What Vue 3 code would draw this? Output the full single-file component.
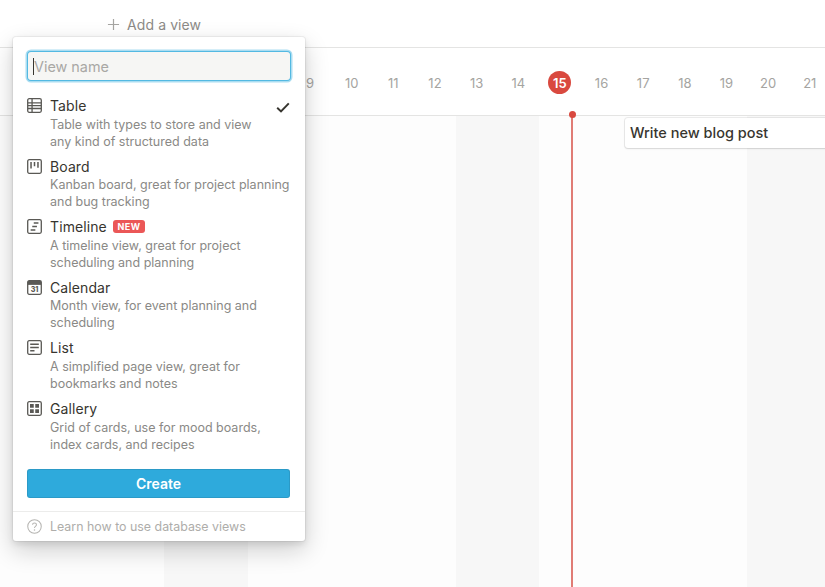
<script setup>
const weekendDays = [6, 7, 13, 14, 20, 21]
const days = Array.from({ length: 19 }, (_, i) => i + 3)
  .map((n) => ({ n, weekend: weekendDays.includes(n), today: n === 15 }))

const views = [
  { name: 'Table', icon: 'table', checked: true, lines: ['Table with types to store and view', 'any kind of structured data'] },
  { name: 'Board', icon: 'board', lines: ['Kanban board, great for project planning', 'and bug tracking'] },
  { name: 'Timeline', icon: 'timeline', badge: 'NEW', lines: ['A timeline view, great for project', 'scheduling and planning'] },
  { name: 'Calendar', icon: 'calendar', lines: ['Month view, for event planning and', 'scheduling'] },
  { name: 'List', icon: 'list', lines: ['A simplified page view, great for', 'bookmarks and notes'] },
  { name: 'Gallery', icon: 'gallery', lines: ['Grid of cards, use for mood boards,', 'index cards, and recipes'] },
]
</script>

<template>
  <div class="page">
    <header class="topbar">
      <button class="add-view">
        <svg class="plus" viewBox="0 0 14 14"><path d="M7 1v12M1 7h12" /></svg>
        <span>Add a view</span>
      </button>
    </header>

    <div class="dates">
      <div v-for="d in days" :key="d.n" class="date">
        <span class="date-num" :class="{ today: d.today }">{{ d.n }}</span>
      </div>
    </div>

    <div class="canvas">
      <div v-for="d in days" :key="d.n" class="col" :class="{ weekend: d.weekend }"></div>
    </div>

    <div class="today-line"></div>
    <div class="today-dot"></div>
    <div class="card">Write new blog post</div>

    <section class="popup">
      <div class="search">
        <div class="input"><i class="caret"></i><span>View name</span></div>
      </div>

      <ul class="view-list">
        <li v-for="v in views" :key="v.name" class="view">
          <svg class="vicon" viewBox="0 0 16 16">
            <template v-if="v.icon === 'calendar'">
              <rect x="0.75" y="0.75" width="14.5" height="14.5" rx="1.6" class="stroke" />
              <path d="M1 1h14v4.2H1z" class="fill" />
              <text x="8" y="13" text-anchor="middle" class="cal-text">31</text>
            </template>
            <template v-else>
              <rect x="0.75" y="0.75" width="14.5" height="14.5" rx="1.6" class="stroke" />
              <path v-if="v.icon === 'table'" d="M1 5.2h14M1 8.2h14M1 11.2h14M5.4 1v14" class="stroke" />
              <path v-if="v.icon === 'board'" d="M4.3 3.2v6.8M8 3.2v4.6M11.7 3.2v6" class="stroke thick" />
              <path v-if="v.icon === 'timeline'" d="M7.2 4.2h5M5.6 7.9h5M3.9 11.6h5" class="stroke thick" />
              <path v-if="v.icon === 'list'" d="M3.4 4.4h9.2M3.4 7.9h9.2M3.4 11.4h4.6" class="stroke thick" />
              <path v-if="v.icon === 'gallery'" d="M3.2 3.2h4v4h-4zM8.8 3.2h4v4h-4zM3.2 8.8h4v4h-4zM8.8 8.8h4v4h-4z" class="fill" />
            </template>
          </svg>
          <div class="vtext">
            <div class="vtitle">
              <span>{{ v.name }}</span>
              <span v-if="v.badge" class="badge">{{ v.badge }}</span>
            </div>
            <div class="vdesc">
              <div v-for="line in v.lines" :key="line">{{ line }}</div>
            </div>
          </div>
          <svg v-if="v.checked" class="check" viewBox="0 0 14 11"><path d="M1.2 5.8 5 9.4 12.8 1.4" /></svg>
        </li>
      </ul>

      <div class="actions">
        <button class="create">Create</button>
      </div>

      <footer class="help">
        <svg class="help-icon" viewBox="0 0 16 16">
          <circle cx="8" cy="8" r="7.2" />
          <path d="M5.9 6.2c0-1.2.9-2 2.1-2s2.1.8 2.1 1.9c0 1.7-2.1 1.7-2.1 3.4" />
          <circle class="dot" cx="8" cy="11.7" r=".8" />
        </svg>
        <span>Learn how to use database views</span>
      </footer>
    </section>
  </div>
</template>

<style scoped>
.page {
  position: relative;
  width: 825px;
  height: 587px;
  overflow: hidden;
  background: #fff;
  font-family: Inter, "Liberation Sans", sans-serif;
  color: #37352f;
}
.topbar {
  height: 47px;
  border-bottom: 1px solid #e4e4e3;
  padding-left: 107px;
}
.add-view {
  display: flex;
  align-items: center;
  gap: 7px;
  height: 48px;
  padding: 0;
  border: 0;
  background: none;
  font: 400 14px Inter, "Liberation Sans", sans-serif;
  letter-spacing: 0.1px;
  color: #8d8b87;
}
.plus {
  width: 13px;
  height: 13px;
  fill: none;
  stroke: #a6a5a2;
  stroke-width: 1.3;
}
.dates {
  display: flex;
  height: 67px;
  padding-left: 39.4px;
  border-bottom: 1px solid #e4e4e3;
}
.date {
  flex: 0 0 41.65px;
  display: flex;
  align-items: center;
  justify-content: center;
  padding-top: 2px;
  box-sizing: border-box;
}
.date-num {
  width: 23px;
  height: 23px;
  display: flex;
  align-items: center;
  justify-content: center;
  font-size: 13px;
  color: #a5a4a1;
}
.date-num.today {
  border-radius: 50%;
  background: #d9493f;
  color: #fff;
  font-weight: 600;
}
.canvas {
  display: flex;
  height: 471px;
  padding-left: 39.4px;
  background: #fdfdfd;
}
.col {
  flex: 0 0 41.65px;
  background: #fdfdfd;
}
.col.weekend {
  background: #f7f7f7;
}
.today-line {
  position: absolute;
  left: 571px;
  top: 115px;
  width: 2px;
  height: 472px;
  background: #e07c75;
}
.today-dot {
  position: absolute;
  left: 568.5px;
  top: 110.7px;
  width: 7px;
  height: 7px;
  border-radius: 50%;
  background: #d9493f;
}
.card {
  position: absolute;
  left: 625px;
  top: 117.5px;
  width: 240px;
  height: 30.5px;
  box-sizing: border-box;
  padding: 0 0 1px 5px;
  display: flex;
  align-items: center;
  background: #fff;
  border-radius: 3px;
  box-shadow: 0 0 0 1px rgba(15, 15, 15, 0.07), 0 1px 2px rgba(15, 15, 15, 0.1);
  font-size: 14.5px;
  font-weight: 500;
  color: #37352f;
}
.popup {
  position: absolute;
  left: 13px;
  top: 37px;
  width: 292px;
  height: 504px;
  display: flex;
  flex-direction: column;
  background: #fff;
  border-radius: 3px;
  box-shadow: 0 0 0 1px rgba(15, 15, 15, 0.05), 0 3px 6px rgba(15, 15, 15, 0.1), 0 9px 24px rgba(15, 15, 15, 0.2);
}
.search {
  padding: 15px 15px 0;
}
.input {
  display: flex;
  align-items: center;
  height: 28px;
  padding-left: 5px;
  background: #f6f6f4;
  border-radius: 3px;
  box-shadow: 0 0 0 1px rgba(46, 170, 220, 0.7), 0 0 0 2.5px rgba(46, 170, 220, 0.4);
  font-size: 14.4px;
  color: #a9a8a5;
}
.caret {
  width: 1px;
  height: 17px;
  background: #37352f;
}
.view-list {
  list-style: none;
  margin: 0;
  padding: 15.6px 14px 0;
  flex: 1;
}
.view {
  display: flex;
  align-items: flex-start;
  height: 60.6px;
  position: relative;
}
.vicon {
  flex: none;
  width: 15px;
  height: 15px;
  margin-top: 2.5px;
  margin-right: 8px;
}
.stroke {
  fill: none;
  stroke: #5a5955;
  stroke-width: 1.4;
}
.stroke.thick {
  stroke-width: 1.6;
}
.fill {
  fill: #5a5955;
}
.cal-text {
  font-size: 7.5px;
  font-weight: 800;
  fill: #5a5955;
}
.vtext {
  flex: 1;
}
.vtitle {
  display: flex;
  align-items: center;
  gap: 6.5px;
  height: 19px;
  margin-top: 0.45px;
  font-size: 14px;
  letter-spacing: 0.1px;
  color: #37352f;
}
.badge {
  height: 13px;
  padding: 0 4px;
  display: flex;
  align-items: center;
  background: #eb5757;
  border-radius: 3px;
  color: #fff;
  font-size: 9px;
  font-weight: 700;
  letter-spacing: 0.5px;
}
.vdesc {
  margin-top: 0.55px;
  font-size: 12.5px;
  line-height: 17px;
  color: #8a8986;
  white-space: nowrap;
}
.check {
  position: absolute;
  right: 1px;
  top: 6px;
  width: 14px;
  height: 11px;
  fill: none;
  stroke: #37352f;
  stroke-width: 2;
}
.actions {
  padding: 0 15px 13px 14px;
}
.create {
  display: block;
  width: 100%;
  height: 29px;
  padding: 0;
  border: 0;
  border-radius: 3px;
  background: #2eaadc;
  box-shadow: inset 0 0 0 1px rgba(15, 15, 15, 0.1);
  color: #fff;
  font: 600 14px Inter, "Liberation Sans", sans-serif;
}
.help {
  display: flex;
  align-items: center;
  gap: 8px;
  height: 29px;
  padding: 0 14px;
  border-top: 1px solid #ececeb;
  font-size: 12.4px;
  color: #aeadaa;
}
.help-icon {
  width: 15px;
  height: 15px;
  fill: none;
  stroke: #b5b4b1;
  stroke-width: 1.1;
}
.help-icon .dot {
  fill: #b5b4b1;
  stroke: none;
}
</style>
